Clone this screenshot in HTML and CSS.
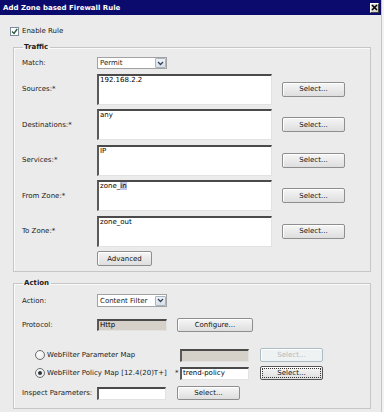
FILE: index.html
```html
<!DOCTYPE html>
<html lang="en">
<head>
  <meta charset="UTF-8" />
  <title>Add Zone based Firewall Rule</title>
  <link rel="stylesheet" href="styles.css">
</head>
<body>
  <div class="window">
    <div class="titlebar">
      <span class="title">Add Zone based Firewall Rule</span>
      <span class="close">
        <svg width="7" height="7" viewBox="0 0 7 7"><path d="M1 1 L6 6 M6 1 L1 6" stroke="#000" stroke-width="1.6"/></svg>
      </span>
    </div>

    <div class="content">
      <label class="enable">
        <span class="checkbox">
          <svg width="7" height="7" viewBox="0 0 7 7"><path d="M1 3.5 L3 5.5 L6.2 1" fill="none" stroke="#2d5a3c" stroke-width="1.4"/></svg>
        </span>
        Enable Rule
      </label>

      <fieldset class="group traffic">
        <legend>Traffic</legend>
        <div class="traffic-grid">
          <span class="lbl">Match:</span>
          <div class="combo"><span>Permit</span><span class="arrow"><svg width="7" height="5" viewBox="0 0 7 5"><path d="M1 1 L3.5 3.5 L6 1" fill="none" stroke="#34405a" stroke-width="1.3"/></svg></span></div>
          <span></span>

          <span class="lbl">Sources:*</span>
          <div class="area">192.168.2.2</div>
          <button class="btn">Select...</button>

          <span class="lbl">Destinations:*</span>
          <div class="area">any</div>
          <button class="btn">Select...</button>

          <span class="lbl">Services:*</span>
          <div class="area">IP</div>
          <button class="btn">Select...</button>

          <span class="lbl">From Zone:*</span>
          <div class="area">zone_<span class="sel">in</span></div>
          <button class="btn">Select...</button>

          <span class="lbl">To Zone:*</span>
          <div class="area">zone_out</div>
          <button class="btn">Select...</button>

          <span></span>
          <div class="adv-cell"><button class="btn adv">Advanced</button></div>
          <span></span>
        </div>
      </fieldset>

      <fieldset class="group action">
        <legend>Action</legend>
        <div class="row row-action">
          <span class="lbl">Action:</span>
          <div class="combo"><span>Content Filter</span><span class="arrow"><svg width="7" height="5" viewBox="0 0 7 5"><path d="M1 1 L3.5 3.5 L6 1" fill="none" stroke="#34405a" stroke-width="1.3"/></svg></span></div>
        </div>
        <div class="row row-protocol">
          <span class="lbl">Protocol:</span>
          <div class="field tan">Http</div>
          <button class="btn configure">Configure...</button>
        </div>
        <div class="row row-radio first">
          <label class="radio-lbl"><span class="radio"></span>WebFilter Parameter Map</label>
          <span class="star"></span>
          <div class="field tan short"></div>
          <button class="btn small disabled">Select...</button>
        </div>
        <div class="row row-radio">
          <label class="radio-lbl"><span class="radio checked"></span>WebFilter Policy Map [12.4(20)T+]</label>
          <span class="star">*</span>
          <div class="field short">trend-policy</div>
          <button class="btn small focus">Select...</button>
        </div>
        <div class="row row-inspect">
          <span class="lbl">Inspect Parameters:</span>
          <div class="field short"></div>
          <button class="btn small">Select...</button>
        </div>
      </fieldset>
    </div>
  </div>
</body>
</html>
```

FILE: styles.css
```css
* {
  box-sizing: border-box;
}

body {
  margin: 0;
  background: #f2f2f2;
  font-family: "DejaVu Sans", Verdana, sans-serif;
  font-size: 7px;
  color: #1a1a1a;
}

.window {
  width: 382px;
  height: 412px;
  background: #ebebeb;
  border-right: 1px solid #c4c4c4;
}

.titlebar {
  height: 15px;
  background: #0b0b6e;
  color: #fff;
  display: flex;
  align-items: center;
  justify-content: space-between;
  padding: 0 2px 0 3px;
}

.title {
  font-weight: bold;
  font-size: 7px;
}

.close {
  width: 9px;
  height: 10px;
  background: #d8d6d0;
  border: 1px solid;
  border-color: #fff #404040 #404040 #fff;
  display: flex;
  align-items: center;
  justify-content: center;
}

.content {
  padding: 0 11px 0 13px;
}

.enable {
  display: flex;
  align-items: center;
  gap: 3px;
  height: 10px;
  margin-top: 11px;
  margin-left: -3px;
}

.checkbox {
  width: 9px;
  height: 9px;
  background: #fff;
  border: 1px solid #7d8c9c;
  display: flex;
  align-items: center;
  justify-content: center;
}

.group {
  margin: 6px 0 0;
  border: 1px solid #c6c6c6;
  box-shadow: inset 1px 1px 0 #fafafa;
  padding: 5px 8px 5px 8px;
  width: 358px;
}

.group legend {
  font-weight: bold;
  padding: 0 2px 0 1px;
  margin-left: 1px;
  line-height: 10px;
}

.traffic-grid {
  display: grid;
  grid-template-columns: 65px 175px 63px;
  column-gap: 10px;
  row-gap: 4.5px;
  align-items: center;
}

.adv-cell {
  display: flex;
}

.lbl {
  white-space: nowrap;
}

.combo {
  width: 70px;
  height: 12px;
  background: #fff;
  border: 1px solid #a2a2a2;
  display: flex;
  align-items: center;
  justify-content: space-between;
  padding-left: 2px;
}

.combo .arrow {
  width: 11px;
  height: 10px;
  background: linear-gradient(#eef2f6, #d8e0e8);
  border: 1px solid #aab4c0;
  border-radius: 1px;
  display: flex;
  align-items: center;
  justify-content: center;
}

.area {
  height: 31px;
  background: #fff;
  border-top: 2px solid #4a4a4a;
  border-left: 2px solid #5a5a5a;
  border-right: 1px solid #e2e2e2;
  border-bottom: 1px solid #e2e2e2;
  padding: 0 1px;
  line-height: 9px;
  color: #000;
}

.sel {
  background: #c2c6ec;
}

.btn {
  font-family: inherit;
  font-size: 7px;
  color: #111;
  height: 15px;
  padding: 0;
  background: linear-gradient(#f6f6f6, #dedede);
  border: 1px solid #8e8e8e;
  border-radius: 2px;
  box-shadow: inset 1px 1px 0 #fff;
}

.btn.adv {
  width: 55px;
}

.traffic-grid .btn:not(.adv) {
  width: 63px;
}

.row {
  display: flex;
  align-items: center;
}

.row .lbl {
  width: 75px;
}

.row-action {
  height: 13px;
  margin-top: 1px;
}

.row-action .combo {
  height: 13px;
}

.row-protocol {
  height: 13px;
  margin-top: 11px;
}

.field {
  width: 70px;
  height: 12px;
  background: #fff;
  border-top: 2px solid #4a4a4a;
  border-left: 2px solid #5a5a5a;
  border-right: 1px solid #e2e2e2;
  border-bottom: 1px solid #e2e2e2;
  padding: 0 1px;
  line-height: 9px;
  color: #000;
}

.field.tan {
  background: #d5d1c9;
}

.field.short {
  width: 69px;
  height: 13px;
}

.configure {
  width: 76px;
  height: 14px;
  margin-left: 10px;
}

.row-radio {
  height: 14px;
  margin-top: 4px;
}

.row-radio.first {
  margin-top: 17px;
}

.radio-lbl {
  width: 153px;
  display: flex;
  align-items: center;
  gap: 2px;
  padding-left: 13px;
  white-space: nowrap;
}

.radio {
  width: 10px;
  height: 10px;
  border-radius: 50%;
  border: 1px solid #6e6e6e;
  background: radial-gradient(circle at 40% 35%, #fff, #e2e2e2);
  display: flex;
  align-items: center;
  justify-content: center;
}

.radio.checked::after {
  content: "";
  width: 4px;
  height: 4px;
  border-radius: 50%;
  background: #2e3440;
}

.star {
  width: 5px;
}

.btn.small {
  width: 63px;
  height: 14px;
  margin-left: 11px;
}

.btn.disabled {
  color: #b4b8ba;
  border-color: #aabcc4;
  background: #eef2f3;
}

.btn.focus {
  border-color: #555;
  outline: 1px dotted #333;
  outline-offset: -3px;
}

.row-inspect {
  height: 14px;
  margin-top: 6px;
  margin-bottom: 3px;
}
```
